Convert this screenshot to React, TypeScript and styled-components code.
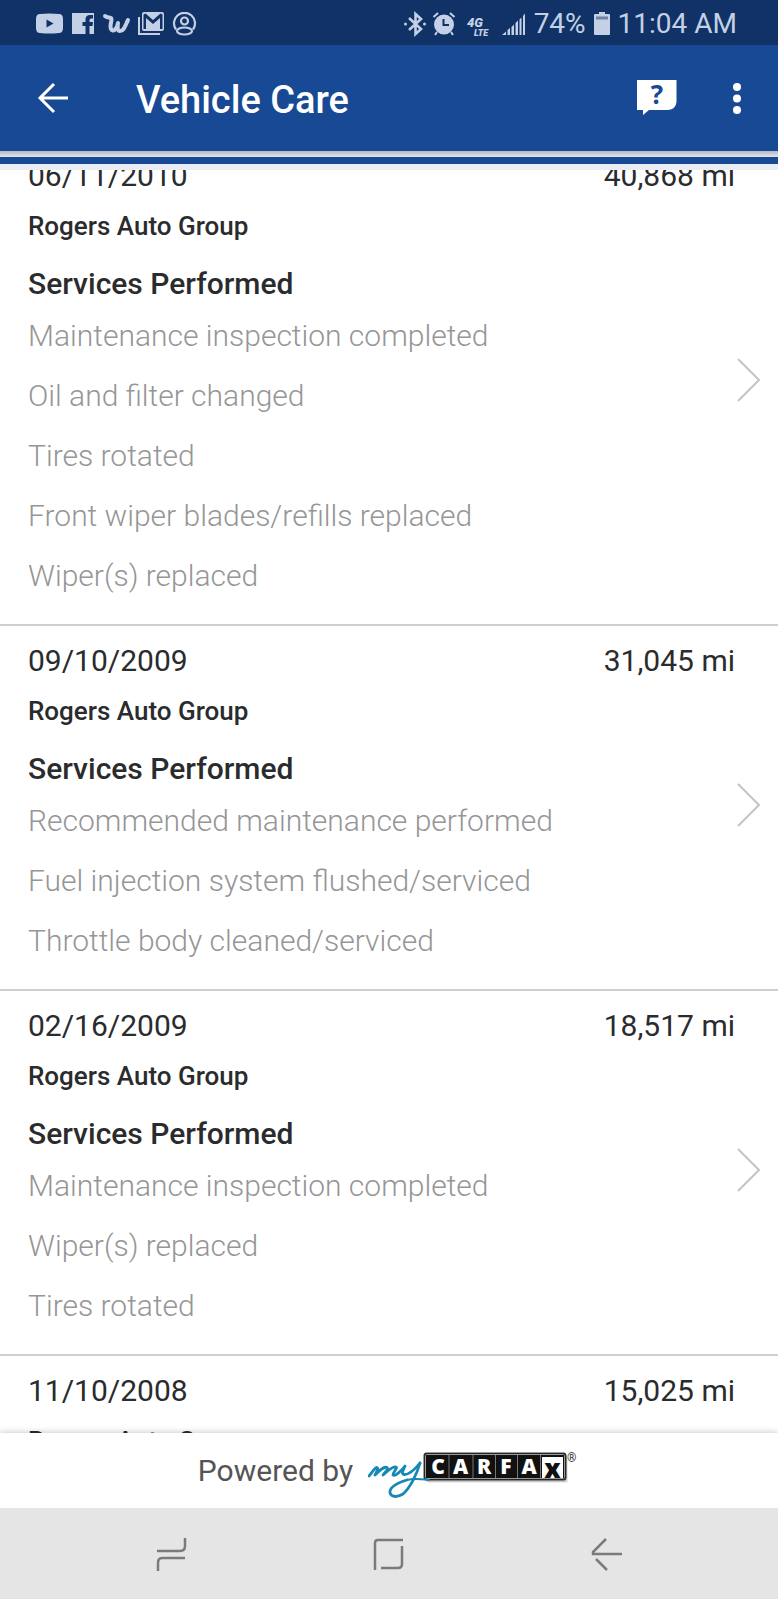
import React from "react";
import styled, { createGlobalStyle } from "styled-components";

const GlobalStyle = createGlobalStyle`
  * { box-sizing: border-box; }
  body { margin: 0; background: #fff; }
  body, button { font-family: Roboto, "Liberation Sans", sans-serif; }
`;

const Screen = styled.div`
  display: flex;
  flex-direction: column;
  height: 100vh;
  overflow: hidden;
  color: #2a2b2d;
`;

const StatusBar = styled.div`
  display: flex;
  flex: none;
  align-items: center;
  justify-content: space-between;
  height: 45px;
  padding: 2px 41px 0 36px;
  background: #103266;
  color: #c3d0e6;
`;

const StatusGroup = styled.div`
  display: flex;
  align-items: center;
  gap: 8px;
`;

const StatusText = styled.span`
  font-size: 28px;
  line-height: 32px;
  white-space: nowrap;
`;

const AppBar = styled.header`
  display: flex;
  flex: none;
  align-items: center;
  height: 106px;
  padding: 0 36px 0 31px;
  background: #174994;
  color: #fff;
`;

const IconButton = styled.button`
  display: flex;
  align-items: center;
  justify-content: center;
  padding: 0;
  border: 0;
  background: none;
  color: inherit;
  cursor: pointer;
`;

const Title = styled.h1`
  flex: 1;
  margin: 0 0 0 67px;
  padding-top: 4px;
  font-size: 38px;
  line-height: 44px;
  font-weight: 500;
`;

const BarActions = styled.div`
  display: flex;
  align-items: center;
  gap: 55px;
`;

const BarEdge = styled.div`
  flex: none;
  height: 19px;
  background: linear-gradient(
    #b4b8c6,
    #e2e4ea 6px,
    #174994 6px,
    #174994 13px,
    #eaecf3 13px
  );
`;

const History = styled.main`
  flex: 1;
  min-height: 0;
  overflow: hidden;
`;

const RecordList = styled.ul`
  margin: -29px 0 0;
  padding: 0;
  list-style: none;
`;

const RecordLink = styled.a`
  display: flex;
  align-items: center;
  gap: 2px;
  min-height: 365px;
  padding: 17px 17px 22px 28px;
  border-bottom: 2px solid #cfcfcf;
  color: inherit;
  text-decoration: none;
`;

const RecordBody = styled.div`
  flex: 1;
  align-self: stretch;
  padding-bottom: 8px;
`;

const RecordTop = styled.div`
  display: flex;
  justify-content: space-between;
  font-size: 30px;
  line-height: 36px;
`;

const Shop = styled.p`
  margin: 16px 0 24px;
  font-size: 26px;
  line-height: 32px;
  font-weight: 500;
`;

const ServicesTitle = styled.h2`
  margin: 0 0 16px;
  font-size: 30px;
  line-height: 36px;
  font-weight: 500;
`;

const Services = styled.ul`
  display: flex;
  flex-direction: column;
  gap: 24px;
  margin: 0;
  padding: 0;
  list-style: none;
  font-size: 30px;
  line-height: 36px;
  font-weight: 300;
  color: #969696;
`;

const Footer = styled.footer`
  display: flex;
  flex: none;
  align-items: center;
  justify-content: center;
  gap: 15px;
  height: 75px;
  background: #fff;
  box-shadow: 0 -1px 6px rgba(0, 0, 0, 0.2);
  color: #555;
  font-size: 30px;
  line-height: 36px;
`;

const NavBar = styled.nav`
  display: flex;
  flex: none;
  align-items: center;
  justify-content: center;
  gap: 184px;
  height: 91px;
  padding-right: 2px;
  background: #e5e5e5;
  color: #7b7b7b;
  z-index: 1;
`;

type ServiceRecord = {
  date: string;
  miles: string;
  services: string[];
};

const records: ServiceRecord[] = [
  {
    date: "06/11/2010",
    miles: "40,868 mi",
    services: [
      "Maintenance inspection completed",
      "Oil and filter changed",
      "Tires rotated",
      "Front wiper blades/refills replaced",
      "Wiper(s) replaced",
    ],
  },
  {
    date: "09/10/2009",
    miles: "31,045 mi",
    services: [
      "Recommended maintenance performed",
      "Fuel injection system flushed/serviced",
      "Throttle body cleaned/serviced",
    ],
  },
  {
    date: "02/16/2009",
    miles: "18,517 mi",
    services: ["Maintenance inspection completed", "Wiper(s) replaced", "Tires rotated"],
  },
  { date: "11/10/2008", miles: "15,025 mi", services: [] },
];

const NotificationIcons = () => (
  <svg width="162" height="24" viewBox="0 0 162 24" fill="currentColor" aria-hidden="true">
    <path fillRule="evenodd" d="M4 2Q13 1 23 2Q27 2 27 7V16Q27 21 23 21Q13 22 4 21Q0 21 0 16V7Q0 2 4 2ZM10.500 7.500V15.500L17.500 11.500Z" />
    <path fillRule="evenodd" d="M36 1H58V22H53.500V14H56.500L57 10H53.500V8Q53.500 6.500 55 6.500H57V3H54Q49.500 3 49.500 7.500V10H46.500V14H49.500V22H36Z" />
    <path d="M69 4C71 6 73 5 75 6C77 7 73 13 75 17C77 21 81 17 82 11C81 17 82 19 84 19C88 19 89 14 92 8" fill="none" stroke="currentColor" strokeWidth="4" strokeLinecap="round" strokeLinejoin="round" />
    <path d="M103 5V22H124" fill="none" stroke="currentColor" strokeWidth="2" />
    <path fillRule="evenodd" d="M108 0H126Q128 0 128 2V17Q128 19 126 19H108Q106 19 106 17V2Q106 0 108 0ZM107.500 2.500V17H110V6L117 12L124 6V17H126.500V2.500L124.500 1.500L117 8L109.500 1.500Z" />
    <g fill="none" stroke="currentColor" strokeWidth="2.200">
      <path d="M140 17.500A10.500 10.500 0 1 1 157 17.500" />
      <circle cx="148.500" cy="9" r="3.500" />
      <ellipse cx="148.500" cy="19" rx="7.500" ry="3.500" />
    </g>
  </svg>
);

const SystemIcons = () => (
  <svg width="122" height="28" viewBox="0 -2 122 28" fill="currentColor" aria-hidden="true">
    <path d="M5 6L17 17L11.500 22V2L17 7L5 18" fill="none" stroke="currentColor" strokeWidth="2.600" />
    <circle cx="1.500" cy="12" r="1.500" />
    <circle cx="20.500" cy="12" r="1.500" />
    <path fillRule="evenodd" d="M40 2.500A10 10 0 1 1 40 22.500A10 10 0 1 1 40 2.500ZM38.500 7V14H45V12H40.500V7Z" />
    <path d="M29.500 5L34 1M50.500 5L46 1M33 20L31 23M47 20L49 23" fill="none" stroke="currentColor" strokeWidth="2" />
    <text x="63" y="15" fontFamily="Roboto, sans-serif" fontSize="13" fontWeight="900" fontStyle="italic">4G</text>
    <text x="70" y="24" fontFamily="Roboto, sans-serif" fontSize="9" fontWeight="900" fontStyle="italic">LTE</text>
    <path d="M98 23L102 19.500V23ZM103.500 18L106 16V23H103.500ZM107.500 15L110 12.500V23H107.500ZM111.500 11L114 8.500V23H111.500ZM115.500 7.500L117.500 5.500V23H115.500ZM119 4L121 1.500V23H119Z" />
  </svg>
);

const BatteryIcon = () => (
  <svg width="16" height="24" viewBox="0 0 16 24" aria-hidden="true">
    <path d="M5 0H11V2H15Q16 2 16 3V22Q16 23 15 23H1Q0 23 0 22V3Q0 2 1 2H5Z" fill="currentColor" />
    <path d="M2 4.500H14V7.500H2Z" fill="#6d82a6" />
  </svg>
);

const BackArrow = () => (
  <svg width="38" height="32" viewBox="0 0 38 32" fill="none" stroke="currentColor" strokeWidth="3" aria-hidden="true">
    <path d="M37 16H10M23 2L9 16L23 30" />
  </svg>
);

const HelpBubble = () => (
  <svg width="40" height="44" viewBox="0 -4 40 44" aria-hidden="true">
    <path d="M0 0H39.500V22Q39 29 31 30H12L6 35V30H0Z" fill="#fff" />
    <text x="20" y="24" textAnchor="middle" fontFamily="Open Sans, sans-serif" fontSize="26" fontWeight="700" fill="#174994">?</text>
  </svg>
);

const MoreDots = () => (
  <svg width="10" height="32" viewBox="0 0 10 32" fill="currentColor" aria-hidden="true">
    <circle cx="5" cy="5" r="4" />
    <circle cx="5" cy="16.500" r="4" />
    <circle cx="5" cy="28" r="4" />
  </svg>
);

const Chevron = () => (
  <svg width="24" height="44" viewBox="0 0 24 44" fill="none" stroke="#c4c4c4" strokeWidth="2" aria-hidden="true">
    <path d="M1 1L22 22L1 43" />
  </svg>
);

const CarfaxLogo = () => (
  <svg width="212" height="54" viewBox="0 -2 212 54" role="img" aria-label="myCARFAX">
    <rect x="59" y="11" width="141" height="26" rx="2" fill="#000" opacity="0.08" />
    <rect x="58" y="10" width="141" height="26" rx="2" fill="#000" opacity="0.14" />
    <rect x="56" y="7" width="142" height="27" rx="2" fill="#111" stroke="#3c3c3c" />
    <rect x="57.500" y="8.500" width="139" height="24" rx="1" fill="none" stroke="#999" />
    <path d="M81 9V32M105 9V32M127.500 9V32M149.500 9V32M172.500 9V32" stroke="#777" />
    <rect x="174" y="11" width="21" height="21" fill="#fff" />
    <g fontFamily="Open Sans, sans-serif" fontSize="21" fontWeight="800" fill="#fff" textAnchor="middle">
      <text x="70" y="28">C</text>
      <text x="92.500" y="28">A</text>
      <text x="116" y="28">R</text>
      <text x="138" y="28">F</text>
      <text x="161" y="28">A</text>
      <text x="184.500" y="32" fill="#111" fontSize="26">x</text>
    </g>
    <g fill="none" stroke="#1787b5" strokeLinecap="round" strokeLinejoin="round">
      <path strokeWidth="2.800" d="M1 30C4 27 7 21 9 21.500C11 22 8 27 7 29C11 25 16 20 19 21.500C21 23 17 26 15 29C19 26 24 20 28 21C30 22 25 26 25 29C27 31 33 25 37 20C35 24 33 28 36 28.500C42 29 48 22 52 17" />
      <path strokeWidth="2.800" d="M52 17C49 28 42 42 35 48C30 51 24 52 22 47C21 42 28 37 39 34" />
      <path strokeWidth="2" d="M39 34C46 32 53 33 61 34" />
    </g>
    <text x="199" y="16" fontFamily="Roboto, sans-serif" fontSize="12" fontWeight="700" fill="#444">®</text>
  </svg>
);

const NavIcon = ({ d }: { d: string }) => (
  <svg width="34" height="36" viewBox="0 0 34 36" fill="none" stroke="currentColor" strokeWidth="2.500" aria-hidden="true">
    <path d={d} />
  </svg>
);

export default function App() {
  return (
    <Screen>
      <GlobalStyle />
      <StatusBar>
        <NotificationIcons />
        <StatusGroup>
          <SystemIcons />
          <StatusText>74%</StatusText>
          <BatteryIcon />
          <StatusText>11:04 AM</StatusText>
        </StatusGroup>
      </StatusBar>
      <AppBar>
        <IconButton aria-label="Back">
          <BackArrow />
        </IconButton>
        <Title>Vehicle Care</Title>
        <BarActions>
          <IconButton aria-label="Help">
            <HelpBubble />
          </IconButton>
          <IconButton aria-label="More options">
            <MoreDots />
          </IconButton>
        </BarActions>
      </AppBar>
      <BarEdge />
      <History>
        <RecordList>
          {records.map((record) => (
            <li key={record.date}>
              <RecordLink href="#record">
                <RecordBody>
                  <RecordTop>
                    <span>{record.date}</span>
                    <span>{record.miles}</span>
                  </RecordTop>
                  <Shop>Rogers Auto Group</Shop>
                  {record.services.length > 0 && (
                    <>
                      <ServicesTitle>Services Performed</ServicesTitle>
                      <Services>
                        {record.services.map((service) => (
                          <li key={service}>{service}</li>
                        ))}
                      </Services>
                    </>
                  )}
                </RecordBody>
                <Chevron />
              </RecordLink>
            </li>
          ))}
        </RecordList>
      </History>
      <Footer>
        <span>Powered by</span>
        <CarfaxLogo />
      </Footer>
      <NavBar>
        <IconButton aria-label="Recent apps">
          <NavIcon d="M4 15H27Q32 15 32 10V2M32 22H9Q5 22 5 27V35" />
        </IconButton>
        <IconButton aria-label="Home">
          <NavIcon d="M4 34V7Q4 4 7 4H32M31 10V28Q31 32 27 32H10" />
        </IconButton>
        <IconButton aria-label="Back to previous screen">
          <NavIcon d="M17 3L4 16V18H33M7 23L18 34" />
        </IconButton>
      </NavBar>
    </Screen>
  );
}
